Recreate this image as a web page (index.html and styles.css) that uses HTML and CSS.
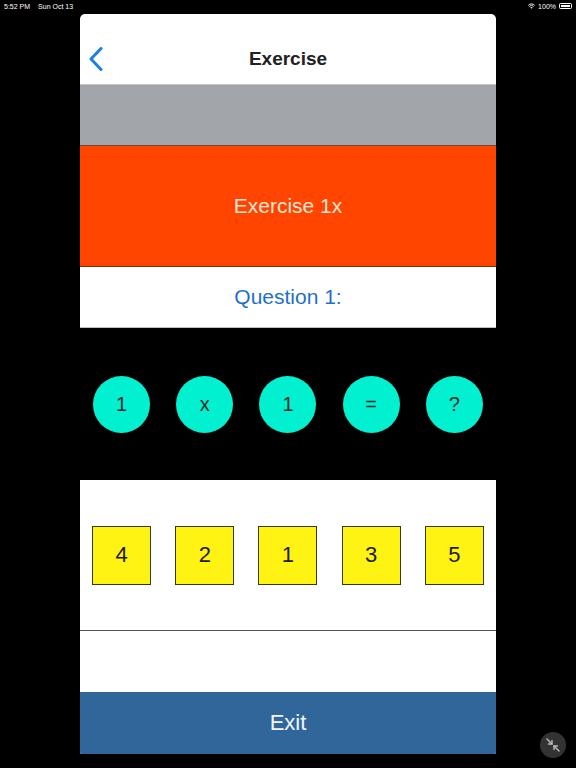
FILE: index.html
```html
<!DOCTYPE html>
<html>
<head>
<meta charset="utf-8">
<link rel="stylesheet" href="styles.css">
</head>
<body>
<div class="status">
  <div class="status-left"><span>5:52 PM</span><span>Sun Oct 13</span></div>
  <div class="status-right">
    <svg class="wifi" width="7" height="6" viewBox="0 0 14 11"><path d="M7 11 L4.6 8.4 A3.5 3.5 0 0 1 9.4 8.4 Z" fill="#fff"/><path d="M2.6 6.3 A6.3 6.3 0 0 1 11.4 6.3" stroke="#fff" stroke-width="1.8" fill="none"/><path d="M0.6 4 A9.2 9.2 0 0 1 13.4 4" stroke="#fff" stroke-width="1.8" fill="none"/></svg>
    <span>100%</span>
    <span class="battery"><span class="battery-fill"></span></span>
  </div>
</div>
<div class="card">
  <div class="nav">
    <svg class="back" width="14" height="24" viewBox="0 0 14 24"><path d="M12 1.5 L2 12 L12 22.5" stroke="#1b7fe3" stroke-width="3" fill="none" stroke-linecap="round" stroke-linejoin="round"/></svg>
    <div class="title">Exercise</div>
  </div>
  <div class="gray-band"></div>
  <div class="orange-band">Exercise 1x</div>
  <div class="question">Question 1:</div>
  <div class="equation">
    <div class="cell"><div class="circle">1</div></div>
    <div class="cell"><div class="circle">x</div></div>
    <div class="cell"><div class="circle">1</div></div>
    <div class="cell"><div class="circle">=</div></div>
    <div class="cell"><div class="circle">?</div></div>
  </div>
  <div class="answers">
    <div class="cell"><div class="square">4</div></div>
    <div class="cell"><div class="square">2</div></div>
    <div class="cell"><div class="square">1</div></div>
    <div class="cell"><div class="square">3</div></div>
    <div class="cell"><div class="square">5</div></div>
  </div>
  <div class="spacer"></div>
  <div class="exit">Exit</div>
</div>
<div class="float-btn">
  <svg width="16" height="16" viewBox="0 0 16 16"><g stroke="#bbb" stroke-width="1.4" fill="none" stroke-linecap="round" stroke-linejoin="round"><path d="M2 2 L7 7"/><path d="M7 3.5 L7 7 L3.5 7"/><path d="M14 14 L9 9"/><path d="M9 12.5 L9 9 L12.5 9"/></g></svg>
</div>
</body>
</html>
```
FILE: styles.css
```css
* { box-sizing: border-box; }
html, body { margin: 0; padding: 0; }
body {
  width: 576px;
  height: 768px;
  background: #000;
  font-family: "Liberation Sans", Arial, sans-serif;
  position: relative;
  overflow: hidden;
}
.status {
  height: 14px;
  display: flex;
  justify-content: space-between;
  align-items: center;
  padding: 0 4px 2px 4px;
  color: #fff;
  font-size: 7px;
}
.status-left { display: flex; gap: 8px; }
.status-right { display: flex; align-items: center; gap: 3px; }
.battery {
  width: 13px;
  height: 6px;
  border: 1px solid #fff;
  border-radius: 1.5px;
  padding: 1px;
  display: flex;
}
.battery-fill { flex: 1; background: #fff; }
.card {
  margin-left: 80px;
  width: 416px;
  height: 740px;
  background: #fff;
  border-radius: 5px 5px 2px 2px;
  overflow: hidden;
  display: flex;
  flex-direction: column;
}
.nav {
  height: 71px;
  flex: none;
  display: flex;
  align-items: center;
  justify-content: center;
  padding-top: 20px;
  border-bottom: 1px solid #c6c6c8;
  position: relative;
}
.back { position: absolute; left: 9px; top: 33px; }
.title {
  font-size: 19px;
  font-weight: 600;
  color: #222;
  font-family: "Liberation Sans", Arial, sans-serif;
}
.gray-band {
  height: 61px;
  flex: none;
  background: #a2a6ab;
  border-bottom: 1px solid #6b4a3a;
}
.orange-band {
  height: 121px;
  flex: none;
  background: #ff4500;
  border-bottom: 1px solid #7a2c08;
  color: #fde7d8;
  font-size: 21px;
  display: flex;
  align-items: center;
  justify-content: center;
}
.question {
  height: 61px;
  flex: none;
  display: flex;
  align-items: center;
  justify-content: center;
  color: #1f70c8;
  font-size: 21px;
  border-bottom: 1px solid #bdbdbd;
}
.equation {
  height: 152px;
  flex: none;
  background: #000;
  display: grid;
  grid-template-columns: repeat(5, 1fr);
  align-items: center;
}
.cell { display: flex; justify-content: center; align-items: center; }
.circle {
  width: 57px;
  height: 57px;
  border-radius: 50%;
  background: #00f0d0;
  color: #2b2b2b;
  font-size: 20px;
  display: flex;
  align-items: center;
  justify-content: center;
}
.answers {
  height: 151px;
  flex: none;
  display: grid;
  grid-template-columns: repeat(5, 1fr);
  align-items: center;
  border-bottom: 1px solid #555;
}
.square {
  width: 59px;
  height: 59px;
  background: #fff314;
  border: 1px solid #3a3a10;
  color: #1c1c1c;
  font-size: 22px;
  display: flex;
  align-items: center;
  justify-content: center;
}
.spacer { height: 61px; flex: none; }
.exit {
  flex: 1;
  background: #306699;
  color: #f2f6fa;
  font-size: 22px;
  display: flex;
  align-items: center;
  justify-content: center;
}
.float-btn {
  position: absolute;
  left: 540px;
  top: 732px;
  width: 26px;
  height: 26px;
  border-radius: 50%;
  background: #333;
  display: flex;
  align-items: center;
  justify-content: center;
}
```
